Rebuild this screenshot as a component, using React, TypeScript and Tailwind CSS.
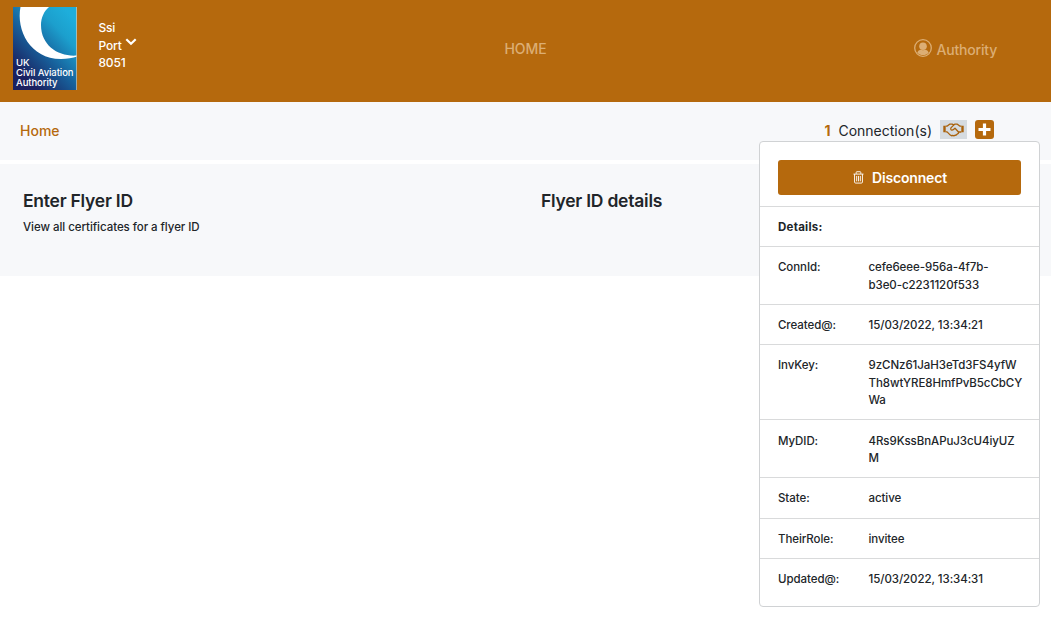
import type { ReactNode } from "react";

function CaaLogo() {
  return (
    <div className="relative h-[83px] w-[64px] overflow-hidden">
      <svg viewBox="0 0 64 83" className="block h-full w-full" aria-hidden="true">
        <defs>
          <linearGradient id="sky" x1="0.85" y1="0.05" x2="0.2" y2="0.85">
            <stop offset="0" stopColor="#1eaedb" />
            <stop offset="0.25" stopColor="#1c9fcd" />
            <stop offset="0.6" stopColor="#17619c" />
            <stop offset="1" stopColor="#1b2160" />
          </linearGradient>
        </defs>
        <rect width="64" height="83" fill="url(#sky)" />
        <path
          d="M7.500 0C3 23 17 52 48 52C54 52 60 51 64 49.500V48.500C46 50 28 39 28 18C28 11 31 4 36 0Z"
          fill="#fff"
        />
        <rect x="63.300" width="0.700" height="83" fill="#d9c7ae" />
      </svg>
      <div className="absolute top-[51px] left-[3px] text-[9.500px] leading-[10px] font-medium tracking-[-0.08px] whitespace-nowrap text-white">
        <div>UK</div>
        <div>Civil Aviation</div>
        <div>Authority</div>
      </div>
    </div>
  );
}

function ChevronIcon() {
  return (
    <svg viewBox="0 0 12 8" className="h-[8px] w-[12px]" fill="none" stroke="#fff" strokeWidth="2.200">
      <path d="M1.300 1.300L6 5.800L10.700 1.300" />
    </svg>
  );
}

function UserIcon() {
  return (
    <svg viewBox="0 0 18 18" className="h-[18px] w-[18px]" fill="currentColor">
      <circle cx="9" cy="9" r="8.300" fill="none" stroke="currentColor" strokeWidth="1.300" />
      <circle cx="9" cy="7.200" r="3.800" />
      <path d="M3.300 13.700C3.800 11.600 5.400 11 7 10.700C8.300 11.300 9.700 11.300 11 10.700C12.600 11 14.200 11.600 14.700 13.700C13.200 15.200 11.200 16 9 16S4.800 15.200 3.300 13.700Z" />
    </svg>
  );
}

function TrashIcon() {
  return (
    <svg viewBox="0 0 12 14" className="h-[13px] w-[11px]" fill="none" stroke="#fff" strokeWidth="1">
      <path d="M0.500 3.300H11.500M3.500 3V1.300Q3.500 0.700 4.100 0.700H7.900Q8.500 0.700 8.500 1.300V3M1.700 3.300V11.900Q1.700 13.100 2.900 13.100H9.100Q10.300 13.100 10.300 11.900V3.300M4 5.300V11.200M6 5.300V11.200M8 5.300V11.200" />
    </svg>
  );
}

function HandshakeIcon() {
  return (
    <svg viewBox="0 0 21 14" className="h-[14px] w-[21px]" fill="none" stroke="#a9620c" strokeWidth="1.300" strokeLinejoin="round">
      <path d="M0.300 2.700H2.700V9.300H0.300ZM18.300 2.700H20.700V9.300H18.300Z" fill="#a9620c" stroke="none" />
      <path d="M2.700 3.100H4.300L6.600 1.200H9.200L10.500 1.800L12 1.200H14.400L16.700 3.100H18.300M2.700 8.900H4.100L7.300 12.100Q8.600 13.200 9.700 12.400Q11 13.200 12 12.200Q13.600 12.400 14.200 11Q15.800 10.800 15.500 9H18.300" />
      <path d="M11 1.900L7.900 4.900Q7.300 6.900 9 7.100Q10.200 7 12 5.200L15.500 9" />
    </svg>
  );
}

function PlusIcon() {
  return (
    <svg viewBox="0 0 19 19" className="h-[19px] w-[19px]">
      <rect width="19" height="19" rx="3" fill="#b5690d" />
      <path d="M9.500 3.500V15.500M3.500 9.500H15.500" stroke="#fff" strokeWidth="3.200" />
    </svg>
  );
}

const rows: { label: string; lines: string[] }[] = [
  { label: "ConnId:", lines: ["cefe6eee-956a-4f7b-", "b3e0-c2231120f533"] },
  { label: "Created@:", lines: ["15/03/2022, 13:34:21"] },
  { label: "InvKey:", lines: ["9zCNz61JaH3eTd3FS4yfW", "Th8wtYRE8HmfPvB5cCbCY", "Wa"] },
  { label: "MyDID:", lines: ["4Rs9KssBnAPuJ3cU4iyUZ", "M"] },
  { label: "State:", lines: ["active"] },
  { label: "TheirRole:", lines: ["invitee"] },
  { label: "Updated@:", lines: ["15/03/2022, 13:34:31"] },
];

function PanelRow({ children }: { children: ReactNode }) {
  return (
    <div className="flex border-t border-[#d9dadb] px-[18px] pt-[12.141px] pb-[9.625px]">{children}</div>
  );
}

function ConnectionPanel() {
  return (
    <section className="absolute top-[141px] right-[11px] h-[466px] w-[281px] rounded-[4px] border border-[#d0d2d4] bg-white text-[11.500px] leading-[17.500px] font-medium tracking-[-0.070px]">
      <div className="px-[18px] pt-[18px] pb-[10.922px]">
        <button className="flex h-[35px] w-full items-center justify-center gap-[8px] rounded-[3px] bg-[#b5690d] pl-px text-[14px] font-semibold tracking-[-0.180px] text-white">
          <TrashIcon />
          <span>Disconnect</span>
        </button>
      </div>
      <PanelRow>
        <span className="font-bold tracking-[0.250px]">Details:</span>
      </PanelRow>
      {rows.map((row) => (
        <PanelRow key={row.label}>
          <div className="w-[90.500px] shrink-0">{row.label}</div>
          <div className="whitespace-nowrap">
            {row.lines.map((line) => (
              <div key={line}>{line}</div>
            ))}
          </div>
        </PanelRow>
      ))}
    </section>
  );
}

export default function App() {
  return (
    <div className="relative h-[628px] w-full overflow-hidden bg-white font-['Inter',sans-serif] text-[#212529]">
      <header className="grid h-[102px] grid-cols-[1fr_auto_1fr] bg-[#b5690d]">
        <div className="flex pt-[7px] pl-[13px]">
          <CaaLogo />
          <div className="ml-[21.500px] flex pt-[12px] text-[12px] leading-[17.500px] font-medium tracking-[-0.180px] text-white">
            <div>
              <div>Ssi</div>
              <div>Port</div>
              <div>8051</div>
            </div>
            <div className="pt-[19px]">
              <ChevronIcon />
            </div>
          </div>
        </div>
        <div className="pt-[38px] text-[14px] leading-[21px] font-medium tracking-[-0.100px] text-[#dcae74]">HOME</div>
        <div className="flex justify-end gap-[4px] pt-[39px] pr-[54px] text-[14px] leading-[21px] font-medium tracking-[-0.180px] text-[#dcae74]">
          <UserIcon />
          <span>Authority</span>
        </div>
      </header>

      <nav className="flex h-[58px] justify-between bg-[#f7f8fa] pr-[57px] pl-[20px] text-[14px] leading-[21px]">
        <a className="pt-[18px] font-medium text-[#b5690d]">Home</a>
        <div className="flex pt-[18px]">
          <span className="font-bold text-[#b5690d]">1</span>
          <span className="ml-[8px]">Connection(s)</span>
          <span className="ml-[8px] flex h-[19px] w-[27px] items-center justify-center bg-[#d5dbe0]">
            <HandshakeIcon />
          </span>
          <span className="ml-[8px]">
            <PlusIcon />
          </span>
        </div>
      </nav>

      <main className="mt-[4px] grid h-[112px] grid-cols-[518px_1fr] bg-[#f7f8fa] pt-[24px] pl-[23px]">
        <section>
          <h2 className="text-[17.500px] leading-[26px] font-semibold tracking-[-0.240px]">Enter Flyer ID</h2>
          <p className="mt-[4px] text-[11.500px] leading-[18px] font-medium tracking-[-0.050px]">
            View all certificates for a flyer ID
          </p>
        </section>
        <section>
          <h2 className="text-[17.500px] leading-[26px] font-semibold tracking-[-0.240px]">Flyer ID details</h2>
        </section>
      </main>

      <ConnectionPanel />
    </div>
  );
}
